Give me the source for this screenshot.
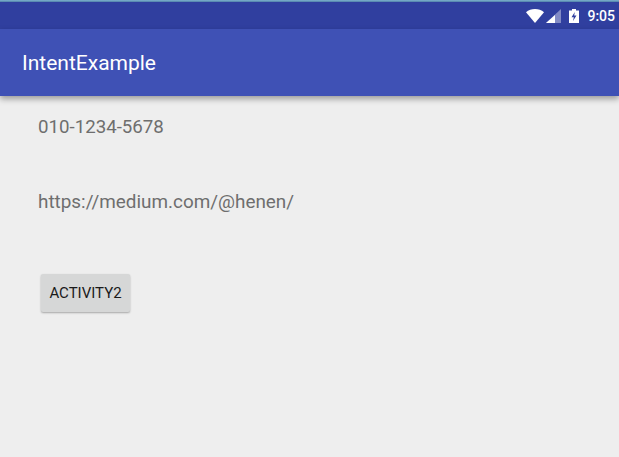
<script>
</script>

<div class="screen">
  <div class="topline"></div>
  <header class="status">
    <svg class="wifi" width="18" height="14" viewBox="0 0 18 14"><path d="M0 3.200C2.500 1.200 5.600 0 9 0s6.500 1.200 9 3.200L9 14z" fill="#fff"/></svg>
    <svg class="signal" width="15" height="14" viewBox="0 0 15 14"><path d="M15 0v14H0z" fill="#fff" fill-opacity=".4"/><path d="M9 6v8H0z" fill="#fff"/></svg>
    <svg class="battery" width="10" height="14" viewBox="0 0 10 14"><path fill-rule="evenodd" d="M3 0h4v1.500h3V14H0V1.500h3zM5.800 3 2.500 8.200h2.300L4 12l3.500-5.500H5.200z" fill="#fff"/></svg>
    <span class="time">9:05</span>
  </header>
  <div class="appbar"><span>IntentExample</span></div>
  <main class="content">
    <p class="phone">010-1234-5678</p>
    <p class="url">https://medium.com/@henen/</p>
    <button>ACTIVITY2</button>
  </main>
</div>

<style>
  :global(body) { margin: 0; }
  .screen {
    width: 619px;
    height: 457px;
    background: #eeeeee;
    overflow: hidden;
    font-family: Roboto, sans-serif;
    display: flex;
    flex-direction: column;
  }
  .topline { height: 2px; background: linear-gradient(#7fb4cf, #4f7fa8); }
  .status {
    height: 27px;
    background: #303f9f;
    display: flex;
    align-items: center;
    justify-content: flex-end;
    padding: 1px 4px 0 0;
    box-sizing: border-box;
    color: #fff;
  }
  .wifi { margin-right: 2px; }
  .signal { margin-right: 8px; }
  .battery { margin-right: 8px; }
  .time { font-size: 14px; font-weight: 500; }
  .appbar {
    height: 67px;
    background: #3f51b5;
    display: flex;
    align-items: center;
    padding-left: 22px;
    color: #fff;
    font-size: 21px;
    box-shadow: 0 3px 6px rgba(0, 0, 0, .35);
    position: relative;
  }
  .content { padding: 20px 0 0 38px; display: flex; flex-direction: column; align-items: flex-start; }
  p { margin: 0; font-size: 18.7px; line-height: 22px; color: #6e6e6e; }
  .url { margin-top: 53px; font-size: 18.9px; }
  button {
    margin: 61px 0 0 3px;
    width: 89px;
    height: 38px;
    border: 0;
    border-radius: 2px;
    padding: 0;
    background: #d6d7d7;
    color: #1a1a1a;
    font: 400 15px Roboto, sans-serif;
    box-shadow: 0 1px 2px rgba(0, 0, 0, .3);
  }
</style>
